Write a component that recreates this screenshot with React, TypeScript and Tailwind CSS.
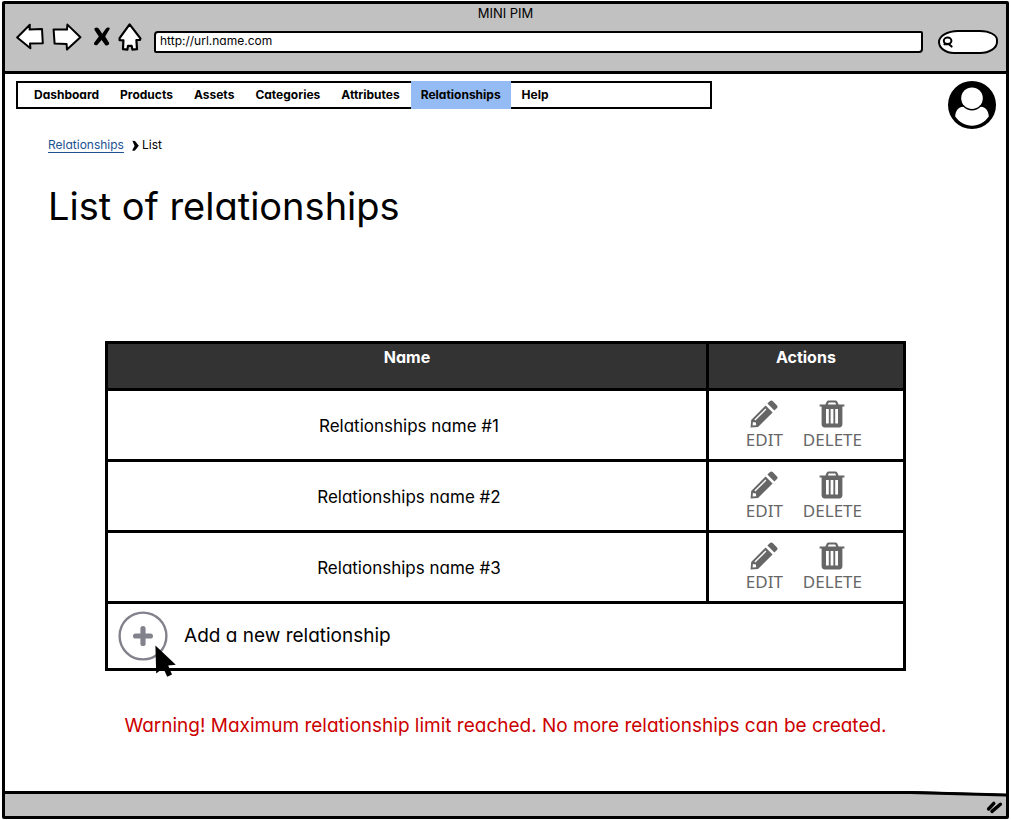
import { useState } from "react";

const navItems = [
  "Dashboard",
  "Products",
  "Assets",
  "Categories",
  "Attributes",
  "Relationships",
  "Help",
];

const relationships = [
  "Relationships name #1",
  "Relationships name #2",
  "Relationships name #3",
];

function BackIcon() {
  return (
    <svg width="28" height="28" viewBox="0 0 28 28" fill="#fff" stroke="#000" strokeWidth="2" strokeLinejoin="round">
      <path d="M1.2 14.5 L13.8 1.8 L13.6 6.6 L26 6 L26.8 20.2 L14 20.6 L14.4 25.2 Z" />
    </svg>
  );
}

function ForwardIcon() {
  return (
    <svg width="30" height="28" viewBox="0 0 30 28" fill="#fff" stroke="#000" strokeWidth="2" strokeLinejoin="round">
      <path d="M1.6 6.4 L15 6.6 L15.4 1.6 L28.4 14.2 L15 26.6 L14.6 21 L2.6 20.6 Z" />
    </svg>
  );
}

function StopIcon() {
  return (
    <svg width="18" height="22" viewBox="0 0 18 22" fill="#000">
      <path d="M1.6 2.2 C3.4 1 5.4 1.6 6.4 3.6 L9.2 7.8 L13 2.4 C14.2 1 16.8 1.4 16.8 2.8 L12.2 10.6 L16.2 17 C16.4 18.8 14.2 20 12.4 19.2 L8.6 14 L4.2 19 C2.4 19.8 0.6 18.8 1 17 L5.8 10.6 L2.2 5 C1.4 4 1.2 3 1.6 2.2 Z" />
    </svg>
  );
}

function HomeIcon() {
  return (
    <svg width="24" height="28" viewBox="0 0 24 28" fill="#fff" stroke="#000" strokeWidth="2.2" strokeLinejoin="round">
      <path d="M11.6 1.4 L22.4 15.4 L22 17 L18.4 17 L19 26.2 L14.4 26.6 L13.6 22.8 L10 22.8 L9.4 26.6 L5 26.2 L5.4 17.4 L1.6 17.2 L1.6 15.2 Z" />
    </svg>
  );
}

function SearchIcon() {
  return (
    <svg width="12" height="12" viewBox="0 0 12 12" fill="none" stroke="#000" strokeWidth="2" strokeLinecap="round" className="shrink-0">
      <ellipse cx="5.6" cy="4.8" rx="3.8" ry="3.2" />
      <path d="M2.4 8.2 H7 L9.6 10.6" />
    </svg>
  );
}

function UserIcon() {
  return (
    <svg width="48" height="48" viewBox="0 0 48 48">
      <circle cx="24" cy="24" r="24" fill="#000" />
      <path d="M7.2 35.6 C7.4 29.6 10.4 26.2 15.2 25.8 C20 30.6 28 30.6 32.8 25.8 C37.6 26.2 40.6 29.6 40.8 35.6 C36.6 41.6 30.8 44.8 24 44.8 C17.2 44.8 11.4 41.6 7.2 35.6 Z" fill="#fff" />
      <circle cx="24" cy="17.2" r="10.8" fill="#fff" />
    </svg>
  );
}

function PencilIcon() {
  return (
    <svg width="28" height="28" viewBox="0 0 28 28" fill="#666">
      <path d="M17.4 3.6 L20 1 C20.8 0.2 21.9 0.2 22.7 1 L27 5.4 C27.8 6.2 27.8 7.3 27 8.1 L24.4 10.6 Z" />
      <path fillRule="evenodd" d="M15.6 5.4 L22.6 12.4 L8 27 L0.6 27.6 L1.2 20 Z M15.4 8.6 L4.4 19.6 L5.4 20.6 L16.4 9.6 Z M2.9 22 L2.6 25.6 L6.2 25.3 L5.9 22.6 Z" />
    </svg>
  );
}

function TrashIcon() {
  return (
    <svg width="26" height="28" viewBox="0 0 26 28" fill="#666">
      <path fillRule="evenodd" d="M0.6 4.6 H6.4 L7.8 1.6 C8.2 0.8 8.8 0.4 9.6 0.4 H16.4 C17.2 0.4 17.8 0.8 18.2 1.6 L19.6 4.6 H25.4 V6.6 H23.4 V24.2 C23.4 26.2 22.2 27.4 20.4 27.4 H5.6 C3.8 27.4 2.6 26.2 2.6 24.2 V6.6 H0.6 Z M8.8 4.6 H17.2 L16.2 2.4 H9.8 Z M7 9 V23.4 H9.8 V9 Z M11.6 9 V23.4 H14.4 V9 Z M16.2 9 V23.4 H19 V9 Z" />
    </svg>
  );
}

function PlusCircleIcon() {
  return (
    <svg width="50" height="50" viewBox="0 0 50 50">
      <circle cx="25" cy="25" r="23.4" fill="#fff" stroke="#82828c" strokeWidth="2.4" />
      <path d="M25 17.6 V32.4 M17.6 25 H32.4" stroke="#82828c" strokeWidth="5.2" strokeLinecap="round" />
    </svg>
  );
}

function Cursor() {
  return (
    <svg width="22" height="33" viewBox="0 0 22 33" className="pointer-events-none absolute top-[34px] left-[37px]">
      <path d="M0.4 0.4 L20.8 19.8 L13.2 20.6 L17 29.4 L12.2 31.8 L8.2 23 L1.2 28.6 Z" fill="#000" />
    </svg>
  );
}

function BrowserBar() {
  const [url, setUrl] = useState("http://url.name.com");
  return (
    <header className="border-b-[3px] border-black bg-[#c1c1c1] pb-[9px]">
      <p className="text-center text-[13px] leading-[18px]">MINI PIM</p>
      <div className="flex h-10 items-center pr-[8px] pl-[11px]">
        <button type="button" aria-label="Back" className="mb-[10px]"><BackIcon /></button>
        <button type="button" aria-label="Forward" className="mb-[10px] ml-[8px]"><ForwardIcon /></button>
        <button type="button" aria-label="Stop" className="mb-[10px] ml-[11px]"><StopIcon /></button>
        <button type="button" aria-label="Home" className="mb-[10px] ml-[7px]"><HomeIcon /></button>
        <input
          type="text"
          aria-label="Address"
          value={url}
          onChange={(e) => setUrl(e.target.value)}
          className="ml-[12px] h-[22px] min-w-0 flex-1 rounded-[4px_2px_4px_2px] border-2 border-black bg-white px-1 pb-[3px] text-xs outline-none"
        />
        <label className="ml-[15px] flex h-[24px] w-[60px] items-center rounded-[20px_18px_18px_16px/12px_10px_12px_12px] border-2 border-black bg-white pl-[2px]">
          <SearchIcon />
          <input type="search" aria-label="Search" className="w-full min-w-0 bg-transparent text-xs outline-none" />
        </label>
      </div>
    </header>
  );
}

export default function App() {
  return (
    <div className="flex min-h-screen flex-col bg-white px-[2px] py-px font-['Inter',sans-serif] text-black [font-feature-settings:'cv11']">
      <div className="flex flex-1 flex-col rounded-[2px] border-[3px] border-black">
        <BrowserBar />

        <main className="flex-1">
          <div className="flex items-start justify-between pt-[7px] pr-[10px] pl-[11px]">
            <nav className="flex h-7 w-[71%] gap-px border-2 border-black pl-[6px]">
              {navItems.map((item) => (
                <a
                  key={item}
                  href="#"
                  className={
                    item === "Relationships"
                      ? "-my-[2px] bg-[#94bbf3] px-[10px] pt-[2px] text-xs leading-6 font-bold"
                      : "px-[10px] text-xs leading-6 font-bold"
                  }
                >
                  {item}
                </a>
              ))}
            </nav>
            <button type="button" aria-label="Account"><UserIcon /></button>
          </div>

          <div className="mt-2 flex items-center pl-[43px] text-xs leading-4">
            <a href="#" className="text-[#1c5192] underline underline-offset-3">Relationships</a>
            <svg width="7" height="12" viewBox="0 0 7 12" className="mt-[2px] mr-[3px] ml-[8px]" fill="#000">
              <path d="M0.4 0.8 L3 1 L6.8 5.8 L3 10.4 L0.6 11 L0.6 9.4 L2.6 6 Z" />
            </svg>
            <span>List</span>
          </div>

          <h1 className="mt-[29px] pl-[43px] text-[38px] leading-[48px]">List of relationships</h1>

          <table className="mx-auto mt-[111px] w-4/5 table-fixed border-collapse border-2 border-black">
            <colgroup>
              <col />
              <col className="w-[197px]" />
            </colgroup>
            <thead>
              <tr className="h-[47px] bg-[#333] text-base leading-5 text-white">
                <th className="border-[3px] border-black pt-[3px] align-top font-bold">Name</th>
                <th className="border-[3px] border-black pt-[3px] align-top font-bold">Actions</th>
              </tr>
            </thead>
            <tbody>
              {relationships.map((name) => (
                <tr key={name} className="h-[71px]">
                  <td className="border-[3px] border-black pt-[4px] pl-[4px] text-center text-[17px]">{name}</td>
                  <td className="border-[3px] border-black pt-[2px] pr-[4px]">
                    <div className="flex justify-center gap-5 font-['Noto_Sans',sans-serif] text-[17px] leading-6 text-[#666]">
                      <button type="button" className="flex flex-col items-center">
                        <PencilIcon />
                        EDIT
                      </button>
                      <button type="button" className="flex flex-col items-center">
                        <TrashIcon />
                        DELETE
                      </button>
                    </div>
                  </td>
                </tr>
              ))}
              <tr className="h-[67px]">
                <td colSpan={2} className="border-[3px] border-black pl-[10px]">
                  <button type="button" className="relative flex items-center gap-4 text-[19px]">
                    <PlusCircleIcon />
                    Add a new relationship
                    <Cursor />
                  </button>
                </td>
              </tr>
            </tbody>
          </table>

          <p role="alert" className="mt-[43px] mb-10 text-center text-[19px] leading-6 text-[#cc0000]">
            Warning! Maximum relationship limit reached. No more relationships can be created.
          </p>
        </main>

        <footer className="relative flex h-[25px] items-center justify-end border-t-[3px] border-black bg-[#c1c1c1] pr-[3px]">
          <svg width="96" height="8" viewBox="0 0 96 8" className="absolute -top-[3px] right-0">
            <path d="M0 0 H96 V3 Z" fill="#fff" />
            <path d="M0 0 L96 2.4 V5.4 L0 3 Z" fill="#000" />
          </svg>
          <svg width="17" height="14" viewBox="0 0 17 14" stroke="#000" strokeLinecap="round" strokeWidth="3.4" className="mt-1">
            <path d="M2.6 9 L7.8 3.4 M6 11.4 L14.4 4.2" />
          </svg>
        </footer>
      </div>
    </div>
  );
}
